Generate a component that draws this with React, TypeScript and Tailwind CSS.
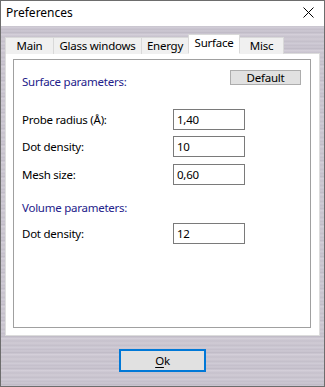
import React from "react";

const font = "font-['Noto_Sans',_'Open_Sans',_sans-serif]";

export default function App() {
    return (
        <div className={`w-[325px] h-[387px] border border-[#6d6d6d] flex flex-col text-[11.5px] tracking-[-0.25px] text-black ${font}`}>
            <div className="h-[25px] bg-white flex items-center justify-between pl-[5px] pr-[10px] shrink-0">
                <span className="text-[12px] leading-none tracking-normal -mt-px">Preferences</span>
                <svg width="11" height="11" viewBox="0 0 11 11" className="-mt-[2px]">
                    <path d="M0.5 0.5 L10.5 10.5 M10.5 0.5 L0.5 10.5" stroke="#000" strokeWidth="1" fill="none" />
                </svg>
            </div>
            <div className="flex-1 flex flex-col px-[4px] pt-[8px] bg-[repeating-linear-gradient(180deg,#c8c4ce_0px,#d2cdd8_2px,#c2bdc9_3px,#cdc8d3_5px,#bdb8c4_7px,#d6d1db_8px,#c6c1cc_11px,#d0cbd5_13px,#c3bec9_16px)]">
                <Tabs />
                <div className="h-[283px] bg-white border border-[#dcdcdc] pt-[5px] pl-[7px] pr-[8px] pb-[7px] flex">
                    <div className="flex-1 border border-[#a0a0a0] flex flex-col pl-[8px] pr-[9px]">
                        <div className="flex justify-between items-start mt-[10px]">
                            <span className="mt-[3px] text-[#23218a]">Surface parameters:</span>
                            <button className="w-[71px] h-[15px] bg-[#e1e1e1] border border-[#adadad] flex items-center justify-center leading-none">Default</button>
                        </div>
                        <Row label="Probe radius (Å):" value="1,40" className="mt-[19px]" />
                        <Row label="Dot density:" value="10" className="mt-[6px]" />
                        <Row label="Mesh size:" value="0,60" className="mt-[7px]" />
                        <div className="mt-[14px] h-[16px] flex items-center text-[#23218a]">Volume parameters:</div>
                        <Row label="Dot density:" value="12" className="mt-[8px]" />
                    </div>
                </div>
                <div className="flex justify-center mt-[13px]">
                    <button className="w-[87px] h-[23px] border-2 border-[#0078d7] bg-[#e1e1e1] flex items-center justify-center leading-none">
                        <span><span className="underline underline-offset-2">O</span>k</span>
                    </button>
                </div>
            </div>
        </div>
    );
}

function Tabs() {
    return (
        <div className="flex items-end h-[20px] -mb-px relative z-10">
            <Tab name="Main" w="w-[49px]" />
            <Tab name="Glass windows" w="w-[89px]" />
            <Tab name="Energy" w="w-[48px]" />
            <Tab name="Surface" w="w-[52px]" active />
            <Tab name="Misc" w="w-[45px]" />
        </div>
    );
}

function Tab({ name, w, active }: { name: string; w: string; active?: boolean }) {
    return (
        <div
            className={`${w} flex items-center justify-center border border-[#d9d9d9] -ml-px first:ml-0 ${active ? "h-[20px] bg-white border-b-white relative z-10 pb-[2px]" : "h-[17px] bg-[#f0f0f0] border-b-0"}`}>
            {name}
        </div>
    );
}

function Row({ label, value, className }: { label: string; value: string; className: string }) {
    return (
        <div className={`flex items-center h-[21px] ${className}`}>
            <span className="w-[151px]">{label}</span>
            <div className="w-[72px] h-[21px] border border-[#7a7a7a] bg-white flex items-center pl-[3px]">{value}</div>
        </div>
    );
}
